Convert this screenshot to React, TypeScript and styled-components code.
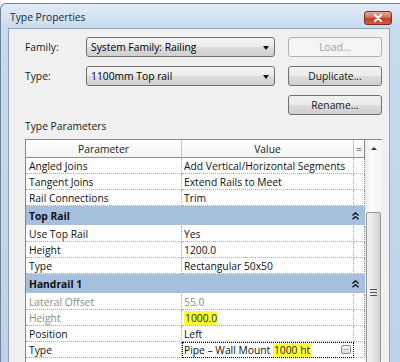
import React from "react";
import styled, { createGlobalStyle } from "styled-components";

const GlobalStyle = createGlobalStyle`
  html, body {
    margin: 0;
    padding: 0;
    background: #ffffff;
  }
  body {
    font-family: "Open Sans", "Noto Sans", sans-serif;
    font-size: 10.3px;
    color: #000;
  }
`;

const Window = styled.div`
  margin-top: 3px;
  width: 400px;
  height: 359px;
  box-sizing: border-box;
  border: 1px solid #6f8296;
  border-right: none;
  border-bottom: none;
  border-radius: 6px 0 0 0;
  background: linear-gradient(to bottom, #e3ecf7 0px, #c9daee 24px, #bdd2ea 100%);
  display: flex;
  flex-direction: column;
  overflow: hidden;
`;

const TitleBar = styled.div`
  height: 24px;
  flex: none;
  display: flex;
  align-items: flex-start;
  justify-content: space-between;
  padding: 0 8px 0 9px;
`;

const Title = styled.div`
  font-size: 10.3px;
  line-height: 14px;
  margin-top: 6px;
  color: #1e2a3a;
`;

const CloseButton = styled.div`
  width: 28px;
  height: 14px;
  margin-top: 7px;
  box-sizing: border-box;
  border: 1px solid #7b2a1e;
  border-radius: 3px;
  background: linear-gradient(to bottom, #e9a99c 0%, #d6705d 45%, #c0402a 55%, #d25f45 100%);
  display: flex;
  align-items: center;
  justify-content: center;
`;

const Content = styled.div`
  flex: 1;
  margin: 0 10px 0 7px;
  background: #f0f0f0;
  border: 1px solid #8ea2b9;
  border-bottom: none;
  padding: 8px 0 0 15px;
`;

const FormGrid = styled.div`
  display: grid;
  grid-template-columns: 49px 189px 94px;
  grid-auto-rows: 20px;
  column-gap: 13px;
  row-gap: 9px;
`;

const Label = styled.div`
  display: flex;
  align-items: center;
  padding-left: 1px;
  color: #1a1a1a;
`;

const Combo = styled.div`
  box-sizing: border-box;
  border: 1px solid #707070;
  border-radius: 3px;
  background: linear-gradient(to bottom, #f4f4f4 0%, #ebebeb 50%, #dddddd 51%, #cfcfcf 100%);
  display: flex;
  align-items: center;
  justify-content: space-between;
  padding: 0 5px 0 4px;
`;

const Arrow = styled.div`
  width: 0;
  height: 0;
  border-left: 3.5px solid transparent;
  border-right: 3.5px solid transparent;
  border-top: 4px solid #111;
  margin-top: 1px;
`;

const Button = styled.div<{ $disabled?: boolean }>`
  grid-column: 3;
  box-sizing: border-box;
  border: 1px solid ${({ $disabled }) => ($disabled ? "#adb2b5" : "#707070")};
  border-radius: 3px;
  background: ${({ $disabled }) =>
    $disabled
      ? "#f4f4f4"
      : "linear-gradient(to bottom, #f2f2f2 0%, #ebebeb 50%, #dddddd 51%, #cfcfcf 100%)"};
  color: ${({ $disabled }) => ($disabled ? "#a0a0a0" : "#1a1a1a")};
  display: flex;
  align-items: center;
  justify-content: center;
`;

const SectionTitle = styled.div`
  line-height: 16px;
  margin: 3px 0 5px 1px;
  color: #1a1a1a;
`;

const TableWrap = styled.div`
  display: flex;
  margin-left: 1px;
`;

const Table = styled.div`
  width: 339px;
  box-sizing: content-box;
  border-left: 1px solid #828790;
  border-top: 1px solid #828790;
  background: #fff;
`;

const Row = styled.div<{ $h?: number }>`
  display: grid;
  grid-template-columns: 156px 172px 11px;
  height: ${({ $h }) => $h ?? 16}px;
  box-sizing: border-box;
`;

const HeadCell = styled.div<{ $last?: boolean }>`
  box-sizing: border-box;
  border-right: 1px solid ${({ $last }) => ($last ? "#828790" : "#c9c9c9")};
  border-bottom: 1px solid #8e8f8f;
  background: linear-gradient(to bottom, #ffffff 0%, #f3f3f3 100%);
  display: flex;
  align-items: center;
  justify-content: center;
  line-height: 14px;
  color: #1a1a1a;
`;

const Cell = styled.div<{ $muted?: boolean; $last?: boolean; $focus?: boolean }>`
  box-sizing: border-box;
  border-right: 1px dotted ${({ $last }) => ($last ? "#828790" : "#a9a9a9")};
  border-bottom: 1px dotted #a9a9a9;
  padding-left: 2px;
  display: flex;
  align-items: center;
  white-space: nowrap;
  overflow: hidden;
  color: ${({ $muted }) => ($muted ? "#8a8a8a" : "#111")};
  ${({ $focus }) =>
    $focus
      ? `outline: 1px dotted #000; outline-offset: -1px; justify-content: space-between; padding-right: 2px;`
      : ""}
`;

const NameCell = styled(Cell)`
  padding-left: 3px;
`;

const GroupRow = styled.div`
  height: 20px;
  box-sizing: border-box;
  background: #a6bfdc;
  border-bottom: 1px solid #ffffff;
  display: flex;
  align-items: center;
  justify-content: space-between;
  padding: 0 6px 0 3px;
  font-weight: 700;
  color: #111;
`;

const Mark = styled.span`
  background: #ffff3a;
  color: #222;
  line-height: 14px;
  padding: 0 1px;
`;

const DotsButton = styled.div`
  width: 10px;
  height: 9px;
  box-sizing: border-box;
  border: 1px solid #8a8a8a;
  border-radius: 2px;
  background: linear-gradient(to bottom, #fafafa, #dedede);
  font-size: 7px;
  line-height: 4px;
  text-align: center;
  color: #333;
`;

const Scroll = styled.div`
  width: 17px;
  display: flex;
  flex-direction: column;
  align-items: center;
  border-top: 1px solid #828790;
  background: linear-gradient(to right, #e9e9e9 0%, #fbfbfb 30%, #f4f4f4 100%);
`;

const UpArrow = styled.div`
  width: 0;
  height: 0;
  margin-top: 7px;
  border-left: 3px solid transparent;
  border-right: 3px solid transparent;
  border-bottom: 3px solid #333;
`;

const Thumb = styled.div`
  margin-top: 62px;
  width: 15px;
  height: 160px;
  box-sizing: border-box;
  border: 1px solid #979797;
  border-radius: 2px;
  background: linear-gradient(to right, #f3f3f3 0%, #e6e6e6 50%, #d2d2d2 100%);
  display: flex;
  flex-direction: column;
  align-items: center;
  justify-content: center;
  gap: 2px;
`;

const Grip = styled.div`
  width: 7px;
  height: 1px;
  background: #555;
`;

const Chevrons = () => (
  <svg width="7" height="8" viewBox="0 0 7 8">
    <path d="M0.5 3.5 L3.5 0.8 L6.5 3.5 M0.5 7.2 L3.5 4.5 L6.5 7.2" fill="none" stroke="#111" strokeWidth="1.3" />
  </svg>
);

type Param = { name: string; value: React.ReactNode; muted?: boolean; focus?: boolean };

const general: Param[] = [
  { name: "Angled Joins", value: "Add Vertical/Horizontal Segments" },
  { name: "Tangent Joins", value: "Extend Rails to Meet" },
  { name: "Rail Connections", value: "Trim" },
];

const topRail: Param[] = [
  { name: "Use Top Rail", value: "Yes" },
  { name: "Height", value: "1200.0" },
  { name: "Type", value: "Rectangular 50x50" },
];

const handrail: Param[] = [
  { name: "Lateral Offset", value: "55.0", muted: true },
  { name: "Height", value: <Mark>1000.0</Mark>, muted: true },
  { name: "Position", value: "Left" },
  {
    name: "Type",
    value: (
      <span>
        Pipe – Wall Mount <Mark>1000 ht</Mark>
      </span>
    ),
    focus: true,
  },
];

const ParamRow = ({ p }: { p: Param }) => (
  <Row>
    <NameCell $muted={p.muted}>{p.name}</NameCell>
    <Cell $muted={p.muted} $focus={p.focus}>
      {p.value}
      {p.focus && <DotsButton>...</DotsButton>}
    </Cell>
    <Cell $last />
  </Row>
);

export default function App() {
  return (
    <>
      <GlobalStyle />
      <Window>
        <TitleBar>
          <Title>Type Properties</Title>
          <CloseButton>
            <svg width="10" height="8" viewBox="0 0 10 8">
              <path d="M2 1 L8 7 M8 1 L2 7" stroke="#fff" strokeWidth="2" strokeLinecap="round" />
            </svg>
          </CloseButton>
        </TitleBar>
        <Content>
          <FormGrid>
            <Label>Family:</Label>
            <Combo>
              System Family: Railing
              <Arrow />
            </Combo>
            <Button $disabled>Load...</Button>
            <Label>Type:</Label>
            <Combo>
              1100mm Top rail
              <Arrow />
            </Combo>
            <Button>Duplicate...</Button>
            <Button>Rename...</Button>
          </FormGrid>
          <SectionTitle>Type Parameters</SectionTitle>
          <TableWrap>
            <Table>
              <Row $h={18}>
                <HeadCell>Parameter</HeadCell>
                <HeadCell>Value</HeadCell>
                <HeadCell $last>=</HeadCell>
              </Row>
              {general.map((p, i) => (
                <ParamRow key={"g" + i} p={p} />
              ))}
              <GroupRow>
                Top Rail
                <Chevrons />
              </GroupRow>
              {topRail.map((p, i) => (
                <ParamRow key={"t" + i} p={p} />
              ))}
              <GroupRow>
                Handrail 1
                <Chevrons />
              </GroupRow>
              {handrail.map((p, i) => (
                <ParamRow key={"h" + i} p={p} />
              ))}
            </Table>
            <Scroll>
              <UpArrow />
              <Thumb>
                <Grip />
                <Grip />
                <Grip />
              </Thumb>
            </Scroll>
          </TableWrap>
        </Content>
      </Window>
    </>
  );
}
